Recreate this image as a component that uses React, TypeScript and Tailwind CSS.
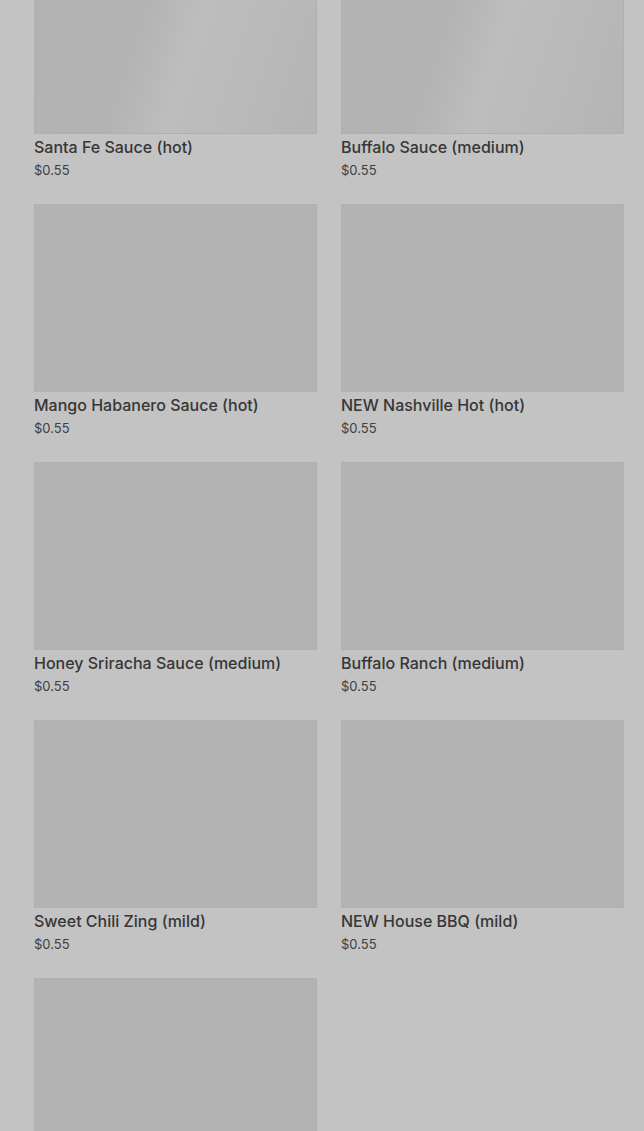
import React from 'react'

const items = [
  { name: 'Santa Fe Sauce (hot)', price: '$0.55', shimmer: true },
  { name: 'Buffalo Sauce (medium)', price: '$0.55', shimmer: true },
  { name: 'Mango Habanero Sauce (hot)', price: '$0.55' },
  { name: 'NEW Nashville Hot (hot)', price: '$0.55' },
  { name: 'Honey Sriracha Sauce (medium)', price: '$0.55' },
  { name: 'Buffalo Ranch (medium)', price: '$0.55' },
  { name: 'Sweet Chili Zing (mild)', price: '$0.55' },
  { name: 'NEW House BBQ (mild)', price: '$0.55' },
  { name: '', price: '' },
]

function Card({ name, price, shimmer }: { name: string; price: string; shimmer?: boolean }) {
  return (
    <div className="flex flex-col">
      <div
        className={
          shimmer
            ? 'h-[188px] border border-[#b0b0b0] bg-[linear-gradient(108deg,#b2b2b2_0%,#b3b3b3_38%,#bdbdbd_55%,#b9b9b9_78%,#b4b4b4_100%)]'
            : 'h-[188px] border border-[#b0b0b0] bg-[#b3b3b3]'
        }
      />
      {name && (
        <>
          <div className="mt-[2px] text-[16px] leading-[22px] font-medium text-[#363636]">{name}</div>
          <div className="mt-[3px] text-[13px] leading-[18px] text-[#3e3e3e]">{price}</div>
        </>
      )}
    </div>
  )
}

export default function App() {
  return (
    <div
      className="h-[1131px] overflow-hidden bg-[#c3c3c3]"
      style={{ fontFamily: 'Inter, "Noto Sans", sans-serif' }}
    >
      <div className="-mt-[54px] grid grid-cols-2 gap-x-[24px] gap-y-[25px] pl-[34px] pr-[20px]">
        {items.map((it, i) => (
          <Card key={i} {...it} />
        ))}
      </div>
    </div>
  )
}
